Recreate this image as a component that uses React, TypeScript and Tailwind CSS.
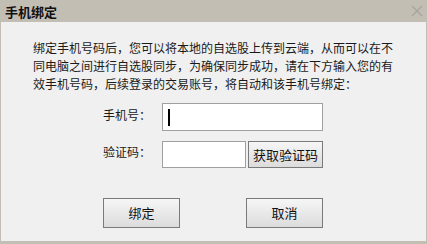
import React from 'react';

// 手机绑定 dialog — classic Windows-style bind-phone prompt.

const FONT = { fontFamily: '"Noto Sans CJK SC", "Liberation Sans", sans-serif' };

function PlainButton({ label, className }: { label: string; className: string }) {
  return (
    <button
      type="button"
      className={`flex items-center justify-center border border-[#7a7a7a] bg-gradient-to-b from-[#f6f6f6] to-[#dcdcdc] text-[13px] text-[#111] ${className}`}
    >
      {label}
    </button>
  );
}

export default function App() {
  return (
    <div className="flex h-[244px] w-[427px] flex-col bg-[#c3beb4]" style={FONT}>
      {/* ---- Title bar ---- */}
      <div className="flex h-[22px] shrink-0 items-center justify-between pl-[5px] pr-[3px]">
        <span className="text-[13px] font-bold leading-none text-[#111]">手机绑定</span>
        <svg width="14" height="14" viewBox="0 0 14 14" className="mb-[1px]">
          <path d="M2 2 L12 12 M12 2 L2 12" stroke="#a8a49c" strokeWidth="1.3" />
        </svg>
      </div>

      {/* ---- Body ---- */}
      <div className="mx-[1px] mb-[3px] flex flex-1 flex-col bg-[#f0f0f0]">
        <p className="w-[395px] pl-[32px] pt-[17px] text-[12px] leading-[18px] text-[#1a1a1a]">
          绑定手机号码后，您可以将本地的自选股上传到云端，从而可以在不同电脑之间进行自选股同步，为确保同步成功，请在下方输入您的有效手机号码，后续登录的交易账号，将自动和该手机号绑定：
        </p>

        <div className="mt-[10px] flex flex-col gap-[10px] pl-[161px]">
          <div className="relative flex items-center">
            <span className="absolute left-[-59px] top-[3px] text-[12px] text-[#1a1a1a]">手机号：</span>
            <div className="flex h-[28px] w-[161px] items-center border border-[#a0a0a0] bg-white pl-[5px]">
              <div className="h-[17px] w-[1.5px] bg-black" />
            </div>
          </div>
          <div className="relative flex items-center">
            <span className="absolute left-[-59px] top-[2px] text-[12px] text-[#1a1a1a]">验证码：</span>
            <div className="h-[27px] w-[84px] border border-[#a0a0a0] bg-white" />
            <PlainButton label="获取验证码" className="ml-[2px] h-[27px] w-[75px] text-[12px]" />
          </div>
        </div>

        <div className="mt-[30px] flex gap-[66px] pl-[102px]">
          <PlainButton label="绑定" className="h-[30px] w-[77px]" />
          <PlainButton label="取消" className="h-[30px] w-[77px]" />
        </div>
      </div>
    </div>
  );
}
